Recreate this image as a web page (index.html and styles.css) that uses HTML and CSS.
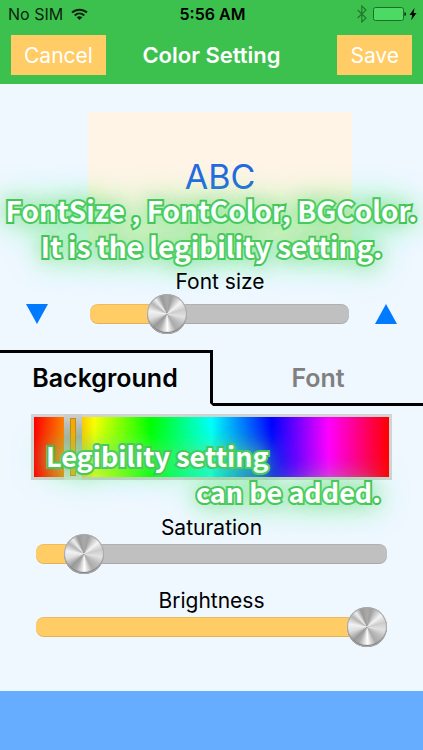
FILE: index.html
```
<!DOCTYPE html>
<html lang="en">
<head>
    <meta charset="UTF-8">
    <meta name="viewport" content="width=device-width, initial-scale=1">
    <title>Color Setting</title>
    <link rel="stylesheet" href="styles.css">
</head>
<body>
<div class="screen">
    <header class="header">
        <div class="status">
            <div class="carrier">
                <span>No SIM</span>
                <svg width="17" height="13" viewBox="0 0 17 13" fill="none" stroke="#0b1f0d" stroke-width="2">
                    <path d="M1 4.6C5.3.7 11.7.7 16 4.6"/>
                    <path d="M3.7 7.4c2.8-2.5 6.8-2.5 9.6 0"/>
                    <path d="M8.5 12L5.7 9.3c1.6-1.4 4-1.4 5.6 0z" fill="#0b1f0d" stroke="none"/>
                </svg>
            </div>
            <span class="time">5:56 AM</span>
            <div class="power">
                <svg width="10" height="18" viewBox="0 0 10 18" fill="none" stroke="#21792c" stroke-width="1.2">
                    <path d="M.7 5L9 13l-4.200 4V1L9 5 .7 13"/>
                </svg>
                <svg width="34" height="14" viewBox="0 0 34 14">
                    <rect x="0.5" y="0.5" width="30" height="13" rx="2" fill="#4cd964" stroke="#1c6f29"/>
                    <path d="M31.5 5c2 .3 2 3.7 0 4z" fill="#0b1f0d"/>
                </svg>
                <svg width="8" height="14" viewBox="0 0 8 14">
                    <path d="M5.500 1L.5 8h2.700l-1 5.200L7.500 6H4.600z" fill="#000"/>
                </svg>
            </div>
        </div>
        <div class="nav">
            <button class="btn" type="button">Cancel</button>
            <h1 class="title">Color Setting</h1>
            <button class="btn save" type="button">Save</button>
        </div>
    </header>

    <main class="main">
        <section class="sample">
            <div class="preview">ABC</div>
            <p class="caption caption-top">FontSize , FontColor, BGColor.<br>It is the legibility setting.</p>
        </section>

        <label class="label label-size" for="size">Font size</label>
        <div class="size-row">
            <button class="step" type="button" aria-label="Smaller">
                <svg width="22" height="20" viewBox="0 0 22 20"><path d="M0 0h22L11 20z" fill="#007aff"/></svg>
            </button>
            <input class="slider" id="size" type="range" min="0" max="100" value="26" style="--value: 26%">
            <button class="step" type="button" aria-label="Larger">
                <svg width="22" height="20" viewBox="0 0 22 20"><path d="M0 20h22L11 0z" fill="#007aff"/></svg>
            </button>
        </div>

        <div class="tabs">
            <button class="tab select" type="button">Background</button>
            <button class="tab" type="button">Font</button>
        </div>

        <section class="colors">
            <div class="hue-box">
                <input class="hue" type="range" min="0" max="100" value="9" aria-label="Hue">
                <p class="caption caption-hue"><span>Legibility setting</span><span class="end">can be added.</span></p>
            </div>
            <label class="label" for="saturation">Saturation</label>
            <input class="slider" id="saturation" type="range" min="0" max="100" value="9" style="--value: 9%">
            <label class="label" for="brightness">Brightness</label>
            <input class="slider" id="brightness" type="range" min="0" max="100" value="100" style="--value: 100%">
        </section>
    </main>

    <footer class="footer"></footer>
</div>
<script>
    var aSlider = document.getElementsByClassName("slider");
    for (var i = 0; i < aSlider.length; i++) {
        aSlider[i].oninput = function () {
            this.style.setProperty("--value", this.value + "%");
        };
    }
    var aTab = document.getElementsByClassName("tab");
    for (var j = 0; j < aTab.length; j++) {
        aTab[j].onclick = function () {
            for (var k = 0; k < aTab.length; k++) {
                aTab[k].className = "tab";
            }
            this.className = "tab select";
        };
    }
</script>
</body>
</html>
```
FILE: styles.css
```
*{
    padding: 0;
    margin: 0;
    box-sizing: border-box;
}
body{
    font-family: Inter, "Liberation Sans", sans-serif;
    color: #000;
    background: #eff7ff;
}
button{
    border: 0;
    background: none;
    font-family: inherit;
    cursor: pointer;
}
svg{
    display: block;
}
.screen{
    display: flex;
    flex-direction: column;
    min-height: 100vh;
}

/* header */
.header{
    height: 84px;
    background: #3cc14e;
}
.status{
    display: grid;
    grid-template-columns: 1fr auto 1fr;
    align-items: center;
    height: 28px;
    padding: 0 6px 0 8px;
    font-size: 16px;
    color: #0b1f0d;
}
.carrier,.power{
    display: flex;
    align-items: center;
    gap: 8px;
}
.power{
    justify-content: flex-end;
    gap: 6px;
}
.power svg:last-child{
    margin-left: -4px;
}
.time{
    font-weight: 600;
    color: #000;
}
.nav{
    display: grid;
    grid-template-columns: 1fr auto 1fr;
    align-items: center;
    padding: 7px 11px 0;
}
.btn{
    justify-self: start;
    height: 40px;
    padding: 0 13px;
    background: #ffcc66;
    color: #fff;
    font-size: 21px;
    font-weight: 400;
}
.save{
    justify-self: end;
}
.title{
    color: #fff;
    font-size: 22px;
    font-weight: 600;
}

/* content */
.main{
    flex: 1;
    padding-bottom: 54px;
}
.sample{
    position: relative;
    padding: 28px 71px 27px 88px;
}
.preview{
    display: flex;
    align-items: center;
    justify-content: center;
    height: 130px;
    line-height: 32px;
    background: #fff4e5;
    color: #2469e0;
    font-size: 34px;
}
.caption{
    position: absolute;
    color: #fff;
    font-family: "Noto Sans CJK JP", "Noto Sans", sans-serif;
    font-size: 27px;
    font-weight: 700;
    line-height: 36px;
    white-space: nowrap;
    -webkit-text-stroke: 4px #3aba4c;
    paint-order: stroke fill;
    text-shadow: 0 0 16px rgba(95,224,112,.7), 0 0 28px #7fe88c, 0 0 36px #7fe88c;
    pointer-events: none;
}
.caption-top{
    left: 0;
    right: 0;
    top: 108px;
    font-size: 28px;
    text-align: center;
}
.caption-hue{
    left: 15px;
    right: 11px;
    top: 24px;
}
.caption-hue span{
    display: block;
}
.caption-hue .end{
    text-align: right;
}
.label{
    position: relative;
    display: block;
    height: 24px;
    line-height: 26px;
    font-size: 21px;
    text-align: center;
}
.label-size{
    padding: 0 71px 0 88px;
}
.size-row{
    display: flex;
    align-items: center;
    gap: 26px;
    padding: 11px 26px 26px;
}
.size-row .slider{
    flex: 1;
    min-width: 0;
    margin-left: 16px;
}

/* sliders */
.slider{
    -webkit-appearance: none;
    appearance: none;
    display: block;
    width: 100%;
    height: 20px;
    border-radius: 8px;
    background: linear-gradient(to right, #ffcc66 var(--value), #c0c0c0 var(--value));
    box-shadow: inset 0 1px 0 rgba(0,0,0,.08), inset 0 -1px 0 rgba(0,0,0,.12);
}
.slider::-webkit-slider-thumb{
    -webkit-appearance: none;
    width: 40px;
    height: 40px;
    border-radius: 50%;
    background: conic-gradient(#aaa, #a0a0a0 15deg, #f4f4f4 50deg, #ccc 75deg, #e2e2e2 100deg, #bdbdbd 125deg, #aaa 150deg, #fff 178deg, #aaa 208deg, #999 225deg, #ddd 255deg, #f2f2f2 280deg, #b5b5b5 305deg, #eee 322deg, #999 340deg, #aaa);
    box-shadow: inset 0 0 0 1px #aaa, inset 0 -2px 1px #777;
}

/* tabs */
.tabs{
    display: flex;
    height: 56px;
}
.tab{
    flex: 1;
    border-top: 3px solid transparent;
    border-bottom: 3px solid #000;
    font-size: 25px;
    font-weight: 600;
    color: #808080;
}
.tab.select{
    border-top-color: #000;
    border-bottom-color: transparent;
    border-right: 3px solid #000;
    color: #000;
}
.tab:not(.select) + .select{
    border-right: 0;
    border-left: 3px solid #000;
}

/* background color */
.colors{
    padding: 8px 36px 0;
}
.colors .label{
    margin-bottom: 5px;
}
.colors .slider + .label{
    margin-top: 24px;
}
.hue-box{
    position: relative;
    margin: 0 -5px 35px;
}
.hue{
    -webkit-appearance: none;
    appearance: none;
    display: block;
    width: 100%;
    height: 66px;
    border: 3px solid #d3d3d3;
    background: linear-gradient(to right, #f00, #ff0 17%, #0f0 33%, #0ff 50%, #00f 67%, #f0f 83%, #f00);
}
.hue::-webkit-slider-thumb{
    -webkit-appearance: none;
    width: 18px;
    height: 66px;
    border: solid transparent;
    border-width: 4px 6px;
    border-radius: 2px;
    background: linear-gradient(#ffa800, #ffa800) padding-box, linear-gradient(#d0d0cc, #adada5 35%, #e2e3dc) border-box;
    box-shadow: inset 0 0 0 1px rgba(150,120,60,.6);
}

/* bottom bar */
.footer{
    height: 59px;
    background: #66adff;
}
```
